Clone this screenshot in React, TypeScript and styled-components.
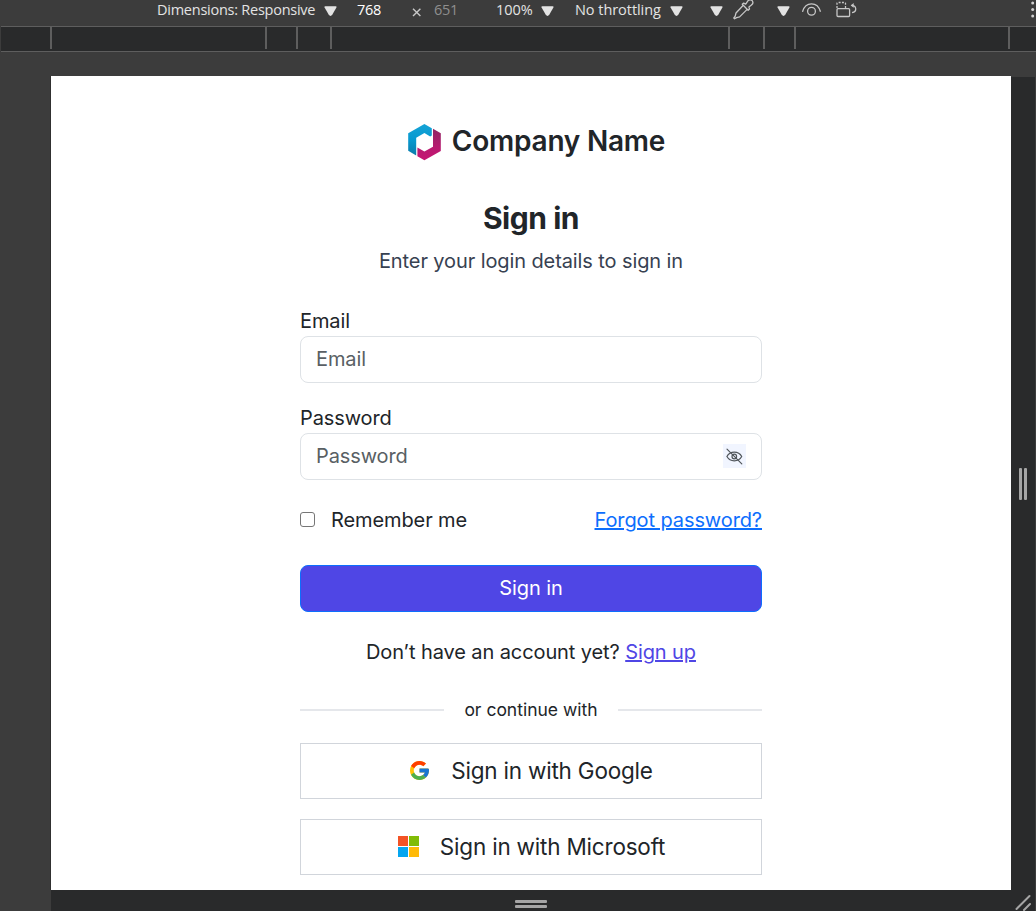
import React from "react";
import styled, { createGlobalStyle } from "styled-components";

const GlobalStyle = createGlobalStyle`
  *, *::before, *::after { box-sizing: border-box; }
  html, body { margin: 0; height: 100%; overflow: hidden; background: #3c3c3c; }
  input, button { font: inherit; letter-spacing: inherit; }
`;

const Window = styled.div`
  width: 1036px;
  height: 911px;
  display: flex;
  flex-direction: column;
  background: #3c3c3c;
  overflow: hidden;
  font-family: Inter, sans-serif;
`;

const Toolbar = styled.div`
  flex: none;
  height: 26px;
  padding-left: 157px;
  display: grid;
  grid-template-columns: 167px 33px 55px 22px 62px 45px 34px 95px 40px 23px 44px 25px 34px 195px 5px;
  align-items: start;
  color: #e3e3e3;
  overflow: hidden;

  svg { display: block; }
`;

const ToolText = styled.span<{ $color?: string; $spacing?: number }>`
  font: 14.5px/20px "Open Sans", sans-serif;
  letter-spacing: ${(p) => p.$spacing ?? -0.05}px;
  color: ${(p) => p.$color ?? "#e3e3e3"};
  white-space: nowrap;
`;

const Ruler = styled.div`
  flex: none;
  height: 26px;
  margin-left: 1px;
  background: #292a2b;
  border: solid #5e5e5e;
  border-width: 1px 0;
  padding-left: 49px;
  display: flex;
`;

const Segment = styled.div<{ $width: number }>`
  flex: none;
  width: ${(p) => p.$width}px;
  height: 22px;
  border-left: 2px solid #5e5e5e;
`;

const Stage = styled.div`
  flex: 1;
  padding: 24px 0 0 51px;
  display: grid;
  grid-template-columns: 960px 25px;
  grid-template-rows: 814px 21px;
`;

const Page = styled.main`
  background: #fff;
  box-shadow: -1px 0 0 #303030;
  display: flex;
  flex-direction: column;
  align-items: center;
  color: #212529;
  letter-spacing: -0.1px;
`;

const SideHandle = styled.div`
  margin: 1px 1px 0 0;
  background: #292a2b;
  display: flex;
  justify-content: center;
  align-items: center;
  gap: 2px;
`;

const BottomHandle = styled.div`
  background: #292a2b;
  display: flex;
  flex-direction: column;
  align-items: center;
  gap: 2px;
  padding-top: 10px;
`;

const Corner = styled.div`
  background: #292a2b;
  margin-right: 1px;
`;

const Grip = styled.i<{ $vertical?: boolean }>`
  flex: none;
  width: ${(p) => (p.$vertical ? 3 : 32)}px;
  height: ${(p) => (p.$vertical ? 32 : 3)}px;
  border-radius: 1px;
  background: #a5a5a5;
`;

const Brand = styled.div`
  height: 40px;
  margin-top: 46px;
  padding-left: 11px;
  display: flex;
  align-items: center;
  gap: 10px;
  font-size: 28px;
  font-weight: 600;
  line-height: 38px;
  letter-spacing: -0.22px;
`;

const BrandName = styled.span`
  padding-bottom: 2px;
`;

const Title = styled.h1`
  margin: 38px 0 0;
  font-size: 30px;
  line-height: 36px;
  font-weight: 700;
  letter-spacing: -0.45px;
`;

const Subtitle = styled.p`
  margin: 10px 0 0;
  font-size: 20px;
  line-height: 30px;
  color: #374151;
`;

const Form = styled.form`
  width: 462px;
  margin-top: 30px;
  font-size: 20px;
  line-height: 30px;
  display: flex;
  flex-direction: column;
`;

const Field = styled.label`
  display: block;
  margin-bottom: 20px;
`;

const InputBox = styled.div`
  height: 47px;
  border: 1px solid #dee2e6;
  border-radius: 8px;
  padding: 0 15px 1px;
  display: flex;
  align-items: center;
`;

const Input = styled.input`
  flex: 1;
  min-width: 0;
  height: 30px;
  border: 0;
  padding: 0;
  outline: 0;
  background: none;
  &::placeholder { color: #595f64; opacity: 1; }
`;

const EyeToggle = styled.span`
  width: 23px;
  height: 24px;
  background: #f1f5ff;
  display: flex;
  align-items: center;
  justify-content: center;
`;

const Options = styled.div`
  height: 30px;
  margin-top: 5px;
  display: flex;
  align-items: center;
  justify-content: space-between;
`;

const Remember = styled.label`
  display: flex;
  align-items: center;
  gap: 16px;
`;

const Checkbox = styled.input`
  appearance: none;
  width: 15px;
  height: 15px;
  margin: 0 0 1px;
  border: 1px solid #767676;
  border-radius: 3px;
`;

const Link = styled.a<{ $color: string }>`
  color: ${(p) => p.$color};
  text-decoration: underline;
`;

const Submit = styled.button`
  height: 47px;
  margin-top: 30px;
  padding: 0 0 1px;
  border: 1px solid #0d6efd;
  border-radius: 8px;
  background: #4f46e5;
  color: #fff;
`;

const SignUp = styled.p`
  margin: 25px 0 0;
  text-align: center;
`;

const Divider = styled.div`
  margin-top: 30px;
  height: 26px;
  display: flex;
  align-items: center;
  justify-content: space-between;
  font-size: 17.5px;
  letter-spacing: 0;

  &::before, &::after {
    content: "";
    width: 144px;
    height: 2px;
    background: #e5e7eb;
  }
`;

const Provider = styled.button<{ $gap: number }>`
  height: 56px;
  margin-top: 20px;
  padding: 0 0 0 1px;
  border: 1px solid #d1d5db;
  background: #fff;
  color: #212529;
  font-size: 22.5px;
  letter-spacing: -0.2px;
  display: flex;
  align-items: center;
  justify-content: center;
  gap: ${(p) => p.$gap}px;

  svg { margin-bottom: 1px; }
`;

const Caret = () => (
  <svg width="13" height="20" viewBox="0 0 13 20">
    <path d="M1.3 6.2h10.4q1.3 0 .7 1.3L8.4 14.6q-1.9 2.6-3.8 0L.6 7.5Q0 6.2 1.3 6.2z" fill="#e3e3e3" />
  </svg>
);

const Dropper = () => (
  <svg width="21" height="20" viewBox="0 0 21 20" fill="none" stroke="#c7c7c7" strokeWidth="1.3" strokeLinejoin="round">
    <path d="M10.3 5.3 3 13l-.8 3.2L.8 18l.8.8 2-1.2 3-.7 7.8-7.8" />
    <path d="m9.3 4.3 1.4-1.2 2 1 2.2-3.3C16-.4 18.5-.4 19.4 1c.9 1.5.4 3-.9 3.9l-2.6 2 .6 2-1.4 1.3z" />
  </svg>
);

const Vision = () => (
  <svg width="20" height="20" viewBox="0 0 20 20" fill="none" stroke="#c7c7c7" strokeWidth="1.3">
    <path d="M.5 11.8C2 6.5 5.4 3.9 9.5 3.9s7.5 2.6 9 7.9" />
    <circle cx="9.5" cy="11.3" r="3.9" />
  </svg>
);

const Rotate = () => (
  <svg width="21" height="20" viewBox="0 0 21 20" fill="none" stroke="#c7c7c7" strokeWidth="1.3">
    <rect x="1" y="8.7" width="12.6" height="7.8" rx="1" />
    <path d="M1 8V3.4q0-.9.9-.9h6.6q1 0 1 .9V8" strokeDasharray="2 1.3" />
    <path d="M16 12.7c2.7-.5 4-2.2 3.7-4.2-.3-1.9-1.6-3.2-4.2-3.1" />
    <path d="M17.7 3v4.7l-3-2.3z" fill="#c7c7c7" stroke="none" />
  </svg>
);

const Dots = () => (
  <svg width="5" height="20" viewBox="0 0 5 20" fill="#d0d0d0">
    <circle cx="1.7" cy="3" r="1.5" />
    <circle cx="1.7" cy="9.5" r="1.5" />
    <circle cx="1.7" cy="16" r="1.5" />
  </svg>
);

const CompanyLogo = () => (
  <svg width="34" height="38" viewBox="0 0 34 38">
    <defs>
      <linearGradient id="logoBlue" x1="0" y1="1" x2="0" y2="0">
        <stop offset="0" stopColor="#0b7ba9" />
        <stop offset=".5" stopColor="#0799d0" />
        <stop offset="1" stopColor="#15a3d6" />
      </linearGradient>
      <linearGradient id="logoPink" x1="0" y1="0" x2="0" y2="1">
        <stop offset="0" stopColor="#8f2563" />
        <stop offset=".6" stopColor="#b81a70" />
        <stop offset="1" stopColor="#c61573" />
      </linearGradient>
    </defs>
    <path d="M16.4 1 .2 10.2v17.6L8.2 32.4V14.8l8.2-4.7 5.8 3.4 1.6-.9V5.2z" fill="url(#logoBlue)" />
    <path d="M25 5.8 32.8 10.3v17.6L16.4 37.2 9.4 33.2V24.6l7 4 8.6-4.8z" fill="url(#logoPink)" />
  </svg>
);

const EyeSlash = () => (
  <svg width="17" height="17" viewBox="0 0 17 17" fill="none" stroke="#50565b" strokeWidth="1.2" strokeLinecap="round">
    <path d="M.9 8.5C2.6 5.6 5.3 4.2 8.3 4.2s5.8 1.4 7.4 4.3c-1.6 2.9-4.4 4.3-7.4 4.3S2.6 11.4.9 8.5z" />
    <circle cx="8.3" cy="8.5" r="2.3" />
    <path d="m1 1.1 14.8 14.8" />
  </svg>
);

const GoogleLogo = () => (
  <svg width="19" height="19" viewBox="4 4 40 40">
    <path fill="#ffc107" d="M43.611 20.083H42V20H24v8h11.303c-1.649 4.657-6.08 8-11.303 8-6.627 0-12-5.373-12-12s5.373-12 12-12c3.059 0 5.842 1.154 7.961 3.039l5.657-5.657C34.046 6.053 29.268 4 24 4 12.955 4 4 12.955 4 24s8.955 20 20 20 20-8.955 20-20c0-1.341-.138-2.65-.389-3.917z" />
    <path fill="#ff3d00" d="m6.306 14.691 6.571 4.819C14.655 15.108 18.961 12 24 12c3.059 0 5.842 1.154 7.961 3.039l5.657-5.657C34.046 6.053 29.268 4 24 4 16.318 4 9.656 8.337 6.306 14.691z" />
    <path fill="#4caf50" d="M24 44c5.166 0 9.86-1.977 13.409-5.192l-6.19-5.238A11.91 11.91 0 0 1 24 36c-5.202 0-9.619-3.317-11.283-7.946l-6.522 5.025C9.505 39.556 16.227 44 24 44z" />
    <path fill="#1976d2" d="M43.611 20.083H42V20H24v8h11.303a12.04 12.04 0 0 1-4.087 5.571l6.193 5.238C36.971 39.205 44 34 44 24c0-1.341-.138-2.65-.389-3.917z" />
  </svg>
);

const MicrosoftLogo = () => (
  <svg width="21" height="21" viewBox="0 0 21 21">
    <path fill="#f35325" d="M0 0h10v10H0z" />
    <path fill="#81bc06" d="M11 0h10v10H11z" />
    <path fill="#05a6f0" d="M0 11h10v10H0z" />
    <path fill="#ffba08" d="M11 11h10v10H11z" />
  </svg>
);

const CornerGrip = () => (
  <svg width="24" height="21" viewBox="0 0 24 21" stroke="#a5a5a5" strokeWidth="2" strokeLinecap="round">
    <path d="M5.5 19 18.5 6M13 20l6-6" />
  </svg>
);

const segments = [215, 31, 34, 398, 35, 31, 214, 2];

export default function App() {
  return (
    <>
      <GlobalStyle />
      <Window>
        <Toolbar>
          <ToolText $spacing={-0.25}>Dimensions: Responsive</ToolText>
          <Caret />
          <ToolText $color="#fff" $spacing={-0.3}>768</ToolText>
          <svg width="9" height="20" viewBox="0 0 9 20" stroke="#c7c7c7" strokeWidth="1.4">
            <path d="m1 8.7 7.4 7.4M8.4 8.7 1 16.1" />
          </svg>
          <ToolText $color="#8f8f8f" $spacing={-0.3}>651</ToolText>
          <ToolText>100%</ToolText>
          <Caret />
          <ToolText>No throttling</ToolText>
          <Caret />
          <Caret />
          <Dropper />
          <Caret />
          <Vision />
          <Rotate />
          <Dots />
        </Toolbar>
        <Ruler>
          {segments.map((width, i) => (
            <Segment key={i} $width={width} />
          ))}
        </Ruler>
        <Stage>
          <Page>
            <Brand>
              <CompanyLogo />
              <BrandName>Company Name</BrandName>
            </Brand>
            <Title>Sign in</Title>
            <Subtitle>Enter your login details to sign in</Subtitle>
            <Form onSubmit={(e) => e.preventDefault()}>
              <Field>
                Email
                <InputBox>
                  <Input type="email" placeholder="Email" />
                </InputBox>
              </Field>
              <Field>
                Password
                <InputBox>
                  <Input type="password" placeholder="Password" />
                  <EyeToggle>
                    <EyeSlash />
                  </EyeToggle>
                </InputBox>
              </Field>
              <Options>
                <Remember>
                  <Checkbox type="checkbox" />
                  Remember me
                </Remember>
                <Link $color="#0d6efd" href="#">Forgot password?</Link>
              </Options>
              <Submit type="submit">Sign in</Submit>
              <SignUp>
                Don’t have an account yet? <Link $color="#4f46e5" href="#">Sign up</Link>
              </SignUp>
              <Divider>or continue with</Divider>
              <Provider type="button" $gap={22}>
                <GoogleLogo />
                Sign in with Google
              </Provider>
              <Provider type="button" $gap={21}>
                <MicrosoftLogo />
                Sign in with Microsoft
              </Provider>
            </Form>
          </Page>
          <SideHandle>
            <Grip $vertical />
            <Grip $vertical />
          </SideHandle>
          <BottomHandle>
            <Grip />
            <Grip />
          </BottomHandle>
          <Corner>
            <CornerGrip />
          </Corner>
        </Stage>
      </Window>
    </>
  );
}
